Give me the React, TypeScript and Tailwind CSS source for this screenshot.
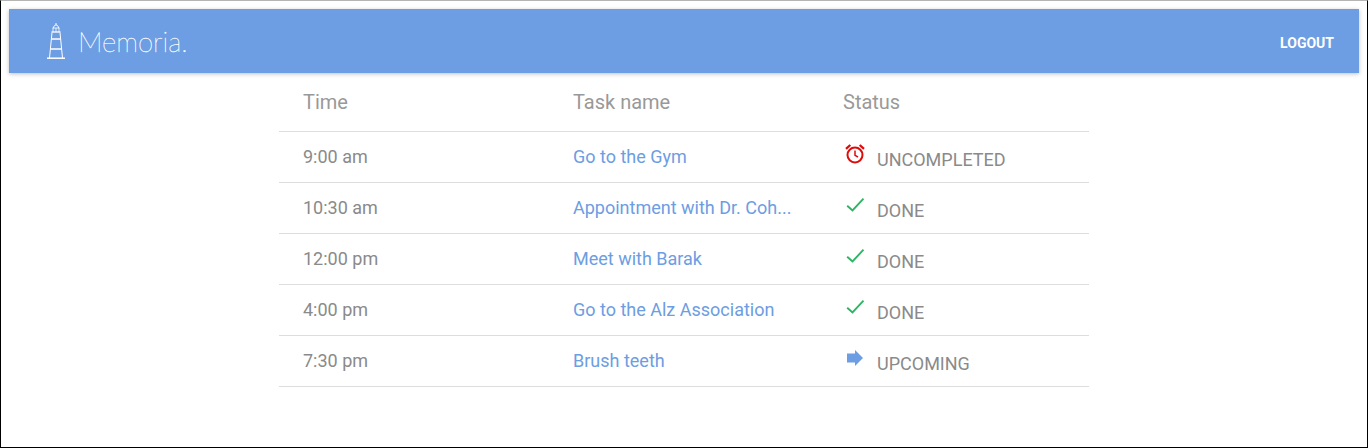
// Memoria task schedule

type Status = 'missed' | 'done' | 'upcoming';

interface Task {
  readonly time: string;
  readonly name: string;
  readonly status: Status;
}

const tasks: readonly Task[] = [
  { time: '9:00 am', name: 'Go to the Gym', status: 'missed' },
  { time: '10:30 am', name: 'Appointment with Dr. Coh...', status: 'done' },
  { time: '12:00 pm', name: 'Meet with Barak', status: 'done' },
  { time: '4:00 pm', name: 'Go to the Alz Association', status: 'done' },
  { time: '7:30 pm', name: 'Brush teeth', status: 'upcoming' },
];

const statusLabel: Record<Status, string> = {
  missed: 'UNCOMPLETED',
  done: 'DONE',
  upcoming: 'UPCOMING',
};

function Lighthouse() {
  return (
    <svg width="18" height="36" viewBox="0 0 18 36" fill="none" stroke="#fff" strokeWidth="1" className="shrink-0">
      <path d="M9 0v2" />
      <path d="M6.500 5c0-1.800 1.200-3 2.500-3s2.500 1.200 2.500 3" />
      <path d="M5.500 5h7M6 5v4M12 5v4M9 5v4" strokeWidth="0.800" />
      <path d="M4.500 9h9" strokeWidth="1.300" />
      <path d="M5 9.500L2.500 35M13 9.500L15.500 35" />
      <path d="M4.500 16h9M3.500 26h11" strokeWidth="1.300" />
      <path d="M0 35.200h18" strokeWidth="1.500" />
    </svg>
  );
}

function StatusIcon({ status }: { status: Status }) {
  if (status === 'missed') {
    return (
      <svg width="20" height="20" viewBox="0 0 20 20" fill="none" stroke="#e00b0b" strokeWidth="2">
        <circle cx="10" cy="11" r="7.500" />
        <path d="M10 6.500v4.800l3 1.700" strokeWidth="1.500" />
        <path d="M1 4.800L5.300 1M19 4.800L14.700 1" strokeWidth="2.300" />
      </svg>
    );
  }
  if (status === 'done') {
    return (
      <svg width="20" height="20" viewBox="0 0 20 20" fill="none" stroke="#2db563" strokeWidth="1.900">
        <path d="M2.200 10.700L7.500 15.500L18.500 3.700" />
      </svg>
    );
  }
  return (
    <svg width="20" height="20" viewBox="0 0 20 20" fill="#6d9de2">
      <path d="M2 5.500h8V2l8 8-8 8v-3.500H2z" />
    </svg>
  );
}

export default function App() {
  return (
    <div className="h-[448px] w-[1368px] border-x border-b border-x-black border-b-black border-t border-t-[#b5b5b5] bg-white p-2 font-['Roboto',sans-serif]">
      <header className="flex h-16 items-center justify-between bg-[#6d9de2] pl-[38px] pr-[25px] shadow-[0_1px_4px_rgba(0,0,0,0.25)]">
        <div className="flex items-center gap-[13px]">
          <Lighthouse />
          <span className="mt-[2px] font-['Lato',sans-serif] text-[27.5px] font-thin leading-none text-white [-webkit-text-stroke:0.3px_#fff]">Memoria.</span>
        </div>
        <button className="mt-[3px] text-sm font-bold text-white">LOGOUT</button>
      </header>

      <div className="mx-auto w-[810px]">
        <div className="flex h-[59px] items-center border-b border-[#dddddd] text-[20px] text-[#999999]">
          <div className="w-[270px] pl-6">Time</div>
          <div className="w-[270px] pl-6">Task name</div>
          <div className="w-[270px] pl-6">Status</div>
        </div>
        {tasks.map((task) => (
          <div key={task.time} className="flex h-[51px] items-center border-b border-[#dddddd] text-lg">
            <div className="w-[270px] pl-6 text-[#8a8a8a]">{task.time}</div>
            <div className="w-[270px] pl-6 text-[#6d9de2]">{task.name}</div>
            <div className="flex w-[270px] items-center gap-3 pl-[26px] text-[#8a8a8a]">
              <span className="-mt-[6px]"><StatusIcon status={task.status} /></span>
              <span className="mt-[6px]">{statusLabel[task.status]}</span>
            </div>
          </div>
        ))}
      </div>
    </div>
  );
}
